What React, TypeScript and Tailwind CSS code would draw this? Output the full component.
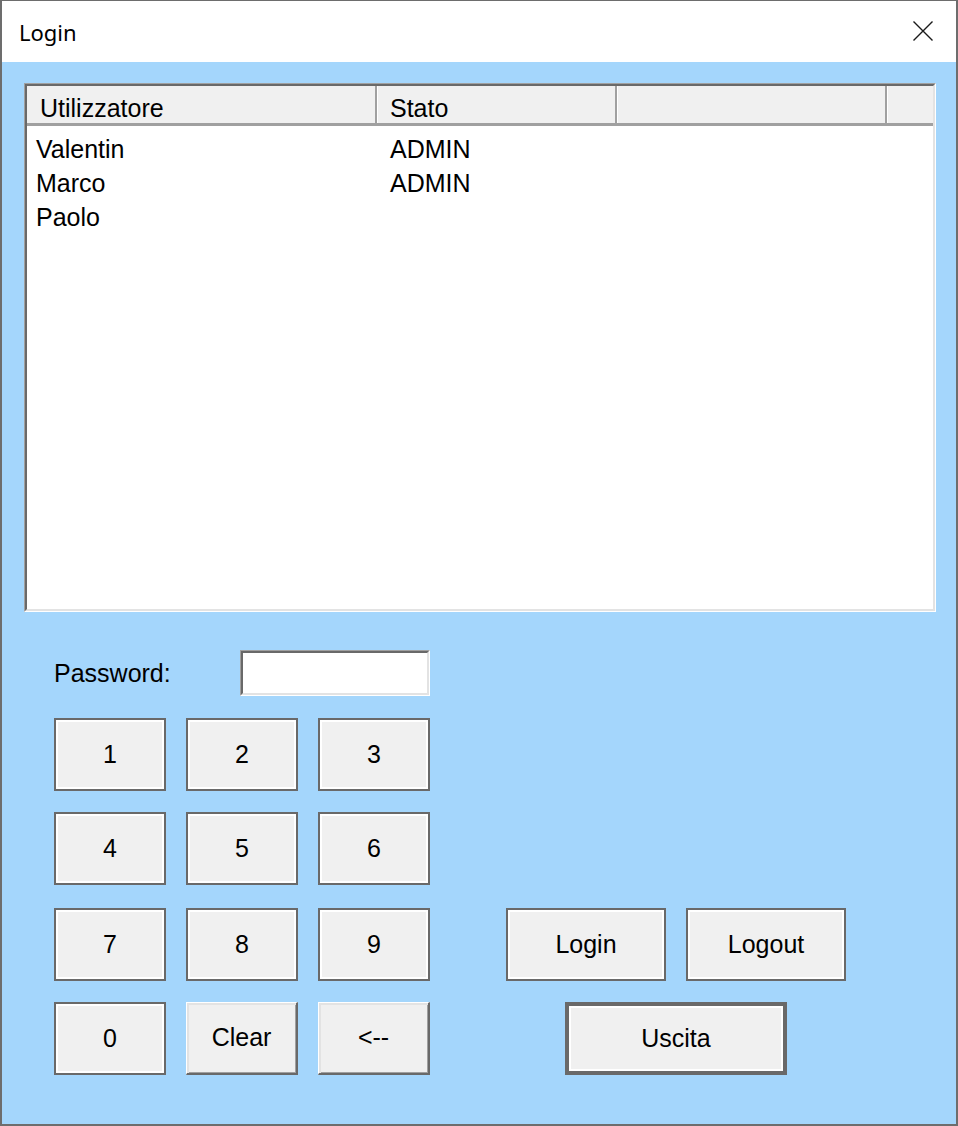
import React from 'react';

const font = { fontFamily: '"Liberation Sans", Arial, sans-serif' };

const KeyButton = ({ label, raised = false }: { label: string; raised?: boolean }) => {
    if (raised) {
        return (
            <button className="w-[112px] h-[73px] bg-[#f0f0f0] border-t border-l border-b-2 border-r-2 border-t-white border-l-white border-b-[#696969] border-r-[#696969] shadow-[inset_2px_2px_0_#e3e3e3,inset_-1px_-1px_0_#a0a0a0] text-[25px] text-black flex items-center justify-center">
                {label}
            </button>
        );
    }
    return (
        <button className="w-[112px] h-[73px] bg-[#f0f0f0] border-2 border-[#696969] shadow-[inset_0_0_0_2px_#ffffff] text-[25px] text-black flex items-center justify-center">
            {label}
        </button>
    );
};

const App = () => {
    const users = [
        { name: "Valentin", stato: "ADMIN" },
        { name: "Marco", stato: "ADMIN" },
        { name: "Paolo", stato: "" },
    ];

    return (
        <div className="w-[958px] h-[1126px] flex flex-col border-t border-l-2 border-r-2 border-b-2 border-[#6d6d6d] bg-white" style={font}>
            {/* title bar */}
            <div className="h-[61px] bg-white flex items-center justify-between pl-[17px] pr-[23px]">
                <span className="text-[22px] text-black pt-[2px]" style={{ fontFamily: '"Segoe UI", "Noto Sans", sans-serif' }}>Login</span>
                <svg width="20" height="20" viewBox="0 0 20 20" className="mb-[2px]">
                    <path d="M0.5 0.5 L19.5 19.5 M19.5 0.5 L0.5 19.5" stroke="#1a1a1a" strokeWidth="1.4" fill="none" />
                </svg>
            </div>

            <div className="flex-1 bg-[#a4d6fc] pl-[22px] pt-[21px]">
                {/* user list */}
                <div className="w-[912px] h-[529px] border border-t-[#a0a0a0] border-l-[#a0a0a0] border-b-white border-r-white">
                    <div className="w-full h-full bg-white border-2 border-t-[#696969] border-l-[#696969] border-b-[#e3e3e3] border-r-[#e3e3e3] text-[25px] text-black">
                        <div className="flex h-[40px] bg-[#f0f0f0] border-b-[3px] border-[#a0a0a0]">
                            <div className="w-[350px] border-r-2 border-[#a0a0a0] pl-[13px] pt-[7px] leading-[30px]">Utilizzatore</div>
                            <div className="w-[240px] border-l border-l-white border-r-2 border-r-[#a0a0a0] pl-[12px] pt-[7px] leading-[30px]">Stato</div>
                            <div className="w-[270px] border-l border-l-white border-r-2 border-r-[#a0a0a0]"></div>
                            <div className="flex-1 border-l border-l-white"></div>
                        </div>
                        <div className="pt-[6px]">
                            {users.map((u) => (
                                <div key={u.name} className="flex h-[34px] leading-[34px]">
                                    <div className="w-[350px] pl-[9px]">{u.name}</div>
                                    <div className="w-[240px] pl-[13px]">{u.stato}</div>
                                </div>
                            ))}
                        </div>
                    </div>
                </div>

                {/* password */}
                <div className="flex items-center mt-[38px] ml-[30px] h-[46px]">
                    <span className="w-[186px] text-[25px] text-black pt-[2px]">Password:</span>
                    <div className="w-[190px] h-[46px] border border-t-[#a0a0a0] border-l-[#a0a0a0] border-b-white border-r-white">
                        <input className="w-full h-full bg-white border-2 border-t-[#696969] border-l-[#696969] border-b-[#e3e3e3] border-r-[#e3e3e3] outline-none" />
                    </div>
                </div>

                {/* keypad + actions */}
                <div className="flex ml-[30px] mt-[22px]">
                    <div className="flex flex-col">
                        <div className="flex gap-x-5">
                            <KeyButton label="1" />
                            <KeyButton label="2" />
                            <KeyButton label="3" />
                        </div>
                        <div className="flex gap-x-5 mt-[21px]">
                            <KeyButton label="4" />
                            <KeyButton label="5" />
                            <KeyButton label="6" />
                        </div>
                        <div className="flex gap-x-5 mt-[23px]">
                            <KeyButton label="7" />
                            <KeyButton label="8" />
                            <KeyButton label="9" />
                        </div>
                        <div className="flex gap-x-5 mt-[21px]">
                            <KeyButton label="0" />
                            <KeyButton label="Clear" raised />
                            <KeyButton label="<--" raised />
                        </div>
                    </div>

                    <div className="ml-[76px] w-[340px] flex flex-col justify-end">
                        <div className="flex gap-x-5">
                            <button className="w-[160px] h-[73px] bg-[#f0f0f0] border-2 border-[#696969] shadow-[inset_0_0_0_2px_#ffffff] text-[25px] text-black">Login</button>
                            <button className="w-[160px] h-[73px] bg-[#f0f0f0] border-2 border-[#696969] shadow-[inset_0_0_0_2px_#ffffff] text-[25px] text-black">Logout</button>
                        </div>
                        <button className="mt-[21px] mx-auto w-[222px] h-[73px] bg-[#f0f0f0] border-4 border-[#696969] shadow-[inset_0_0_0_2px_#ffffff] text-[25px] text-black">Uscita</button>
                    </div>
                </div>
            </div>
        </div>
    );
};

export default App;
